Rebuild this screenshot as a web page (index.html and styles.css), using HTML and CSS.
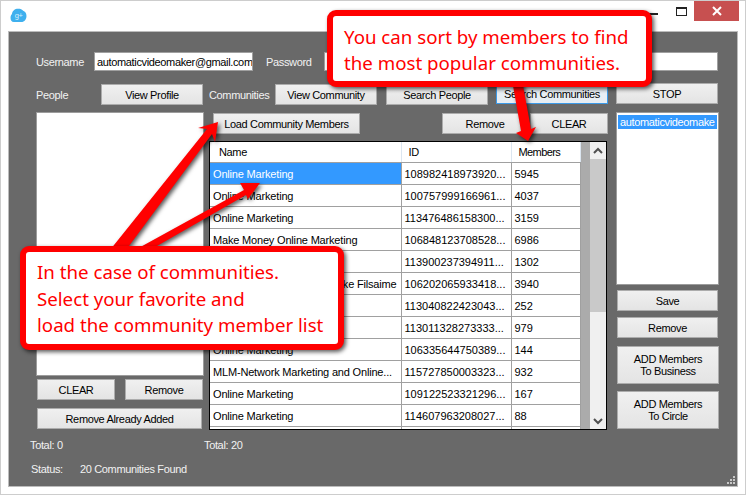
FILE: index.html
```html
<!DOCTYPE html>
<html lang="en">
<head>
<meta charset="UTF-8">
<meta name="viewport" content="width=device-width, initial-scale=1.0">
<title>Google Plus Members</title>
<link rel="stylesheet" href="styles.css">
</head>
<body>
<div class="window">
    <div class="titlebar">
        <svg class="app-icon" width="17" height="15" viewBox="0 0 18 16">
            <path d="M4 15C1.500 15 .5 13 .5 10.500C.5 8.500 1.200 7.500 2 6.500C2.500 3 5 .8 8.500 .8C11 .8 13 1.500 14 3C16 3.800 17.500 5.500 17.500 8.500C17.500 12 15.500 15 12 15Z" fill="#3fb0ee"/>
            <text x="5" y="11" class="app-icon-text">g+</text>
        </svg>
        <div class="win-controls">
            <span class="win-min"></span>
            <span class="win-max"></span>
            <span class="win-close">
                <svg width="10" height="10" viewBox="0 0 10 10"><path d="M1 1L9 9M9 1L1 9" stroke="#fff" stroke-width="2"/></svg>
            </span>
        </div>
    </div>

    <div class="client">
        <div class="login-row">
            <label class="label-user">Username</label>
            <div class="textbox textbox-user">automaticvideomaker@gmail.com</div>
            <label class="label-pass">Password</label>
            <div class="textbox textbox-pass"></div>
        </div>

        <div class="main">
            <!-- people -->
            <div class="col-people">
                <div class="head-row">
                    <span>People</span>
                    <button class="btn btn-profile">View Profile</button>
                </div>
                <div class="listbox people-list"></div>
                <div class="btn-row">
                    <button class="btn btn-half">CLEAR</button>
                    <button class="btn btn-half">Remove</button>
                </div>
                <button class="btn btn-added">Remove Already Added</button>
            </div>

            <!-- communities -->
            <div class="col-comm">
                <div class="head-row">
                    <span class="comm-label">Communities</span>
                    <button class="btn btn-view">View Community</button>
                    <button class="btn btn-search">Search People</button>
                    <button class="btn btn-focus">Search Communities</button>
                </div>
                <div class="tool-row">
                    <button class="btn btn-load">Load Community Members</button>
                    <button class="btn btn-remove">Remove</button>
                    <button class="btn btn-clear">CLEAR</button>
                </div>
                <div class="grid-box">
                    <table class="grid">
                        <thead>
                            <tr><th class="c-name">Name</th><th class="c-id">ID</th><th class="c-mem">Members</th></tr>
                        </thead>
                        <tbody id="rows"></tbody>
                    </table>
                    <div class="grid-empty"></div>
                    <div class="scrollbar">
                        <svg class="chev" width="16" height="17" viewBox="0 0 16 17"><path d="M4 11L8 7L12 11" fill="none" stroke="#505050" stroke-width="2"/></svg>
                        <div class="thumb"></div>
                        <svg class="chev chev-down" width="16" height="17" viewBox="0 0 16 17"><path d="M4 7L8 11L12 7" fill="none" stroke="#505050" stroke-width="2"/></svg>
                    </div>
                </div>
            </div>

            <!-- accounts -->
            <div class="col-acc">
                <button class="btn btn-stop">STOP</button>
                <div class="listbox acc-list"><div class="acc-item">automaticvideomake</div></div>
                <button class="btn btn-side btn-save">Save</button>
                <button class="btn btn-side btn-rem">Remove</button>
                <button class="btn btn-tall btn-biz">ADD Members<br>To Business</button>
                <button class="btn btn-tall btn-circle">ADD Members<br>To Circle</button>
            </div>
        </div>

        <div class="totals">
            <span class="total-left">Total: 0</span>
            <span>Total: 20</span>
        </div>
        <div class="status">
            <span class="status-label">Status:</span>
            <span>20 Communities Found</span>
        </div>

        <svg class="grip" width="10" height="10" viewBox="0 0 10 10">
            <path d="M7 1h2v2h-2zM4 4h2v2h-2zM7 4h2v2h-2zM1 7h2v2h-2zM4 7h2v2h-2zM7 7h2v2h-2z" fill="#c8c8c8"/>
        </svg>
    </div>

    <!-- annotations on top of the screenshot -->
    <svg class="arrows" width="746" height="495" viewBox="0 0 746 495">
        <path d="M110 250L207 129L198 128L218 122L215 142L212 134L126 250Z" fill="#f00"/>
        <path d="M135 250L244 190L240 183L260 183L248 199L246 195L150 250Z" fill="#f00"/>
        <path d="M512 80L522 80L531 129L536 127L528 141L516 133L521 131Z" fill="#f00"/>
    </svg>
    <div class="callout callout-top">You can sort by members to find<br>the most popular communities.</div>
    <div class="callout callout-bottom">In the case of communities.<br>Select your favorite and<br>load the community member list</div>
</div>

<script>
// rows of the communities grid, names under the callout stay empty
const communities = [
    ['Online Marketing', '108982418973920...', '5945'],
    ['Online Marketing', '100757999166961...', '4037'],
    ['Online Marketing', '113476486158300...', '3159'],
    ['Make Money Online Marketing', '106848123708528...', '6986'],
    ['', '113900237394911...', '1302'],
    ['Online Marketing Group, Mike Filsaime', '106202065933418...', '3940'],
    ['', '113040822423043...', '252'],
    ['', '113011328273333...', '979'],
    ['Online Marketing', '106335644750389...', '144'],
    ['MLM-Network Marketing and Online...', '115727850003323...', '932'],
    ['Online Marketing', '109122523321296...', '167'],
    ['Online Marketing', '114607963208027...', '88'],
    ['', '', '']
];

const tbody = document.getElementById('rows');
communities.forEach((row, i) => {
    const tr = document.createElement('tr');
    if (i === 0) tr.className = 'selected';
    tr.innerHTML = `<td>${row[0]}</td><td>${row[1]}</td><td>${row[2]}</td>`;
    tbody.appendChild(tr);
});
</script>
</body>
</html>
```

FILE: styles.css
```css
* {
    box-sizing: border-box;
}
body {
    margin: 0;
    font-family: "Liberation Sans", Arial, sans-serif;
    font-size: 11px;
    letter-spacing: -0.35px;
    color: #000;
    background-color: #fff;
}
.window {
    position: relative;
    width: 746px;
    height: 495px;
    overflow: hidden;
    background-color: #fff;
    border: 1px solid #cdcdcd;
    padding: 0 7px;
}
.titlebar {
    height: 30px;
    position: relative;
}
.app-icon {
    position: absolute;
    left: 2px;
    top: 7px;
}
.app-icon-text {
    font-size: 8px;
    fill: #d8f0fc;
}
.win-controls {
    display: flex;
    justify-content: flex-end;
    margin-right: -1px;
}
.win-min {
    width: 10px;
    height: 2px;
    margin-top: 12px;
    margin-right: 18px;
    background-color: #222;
}
.win-max {
    width: 11px;
    height: 9px;
    margin-top: 6px;
    margin-right: 7px;
    border: 1px solid #222;
    border-top-width: 2px;
}
.win-close {
    width: 45px;
    height: 20px;
    background-color: #c75050;
    display: flex;
    align-items: center;
    justify-content: center;
}
.client {
    position: relative;
    height: 456px;
    background-color: #696969;
    border: 1px solid #bcbcbc;
    padding: 20px 19px 0 27px;
    color: #f2f2f2;
}
.login-row {
    display: flex;
    align-items: center;
    height: 19px;
}
.textbox {
    height: 19px;
    padding: 2px 2px;
    background-color: #fff;
    color: #000;
    border: 1px solid #a0a0a0;
    white-space: nowrap;
    overflow: hidden;
    line-height: 14px;
}
.label-user {
    width: 58px;
}
.textbox-user {
    width: 159px;
}
.label-pass {
    margin-left: 13px;
    width: 58px;
}
.textbox-pass {
    flex: 1;
}
.main {
    display: flex;
    margin-top: 12px;
}
.head-row {
    display: flex;
    align-items: center;
    height: 21px;
    margin-top: 1px;
}
.btn {
    flex-shrink: 0;
    height: 21px;
    padding: 0;
    font-family: inherit;
    font-size: 11px;
    letter-spacing: inherit;
    color: #000;
    background: linear-gradient(#f0f0f0, #e4e4e4);
    border: 1px solid #acacac;
    border-radius: 0;
}
.col-people {
    width: 168px;
}
.btn-profile {
    width: 102px;
    margin-left: auto;
    margin-right: 1px;
}
.listbox {
    background-color: #fff;
    border: 1px solid #9c9c9c;
}
.people-list {
    height: 264px;
    margin-top: 7px;
}
.btn-row {
    display: flex;
    justify-content: space-between;
    margin: 3px 1px 0 1px;
}
.btn-half {
    width: 78px;
}
.btn-added {
    width: 165px;
    margin: 8px 0 0 1px;
    display: block;
}
.col-comm {
    width: 398px;
    margin-left: 5px;
}
.comm-label {
    flex-shrink: 0;
    width: 66px;
}
.btn-view {
    width: 102px;
    margin-right: 9px;
}
.btn-search {
    width: 102px;
    margin-right: 8px;
}
.btn-focus {
    width: 112px;
    height: 20px;
    margin-top: -1px;
    border-color: #3c9ae8;
    background: #e8eef4;
}
.tool-row {
    display: flex;
    margin-top: 8px;
    padding-left: 4px;
}
.btn-load {
    width: 147px;
}
.btn-remove {
    width: 86px;
    margin-left: 82px;
}
.btn-clear {
    width: 78px;
    margin-left: 2px;
}
.grid-box {
    display: flex;
    height: 289px;
    margin-top: 7px;
    background-color: #fff;
    color: #000;
    border: 1px solid #000;
    overflow: hidden;
}
.grid {
    width: 371px;
    table-layout: fixed;
    border-collapse: collapse;
    flex-shrink: 0;
    align-self: flex-start;
}
.c-name {
    width: 191px;
    padding-left: 9px;
}
.c-id {
    width: 110px;
    padding-left: 7px;
}
.c-mem {
    padding-left: 7px;
    letter-spacing: -0.6px;
}
.grid th {
    height: 20px;
    padding-top: 2px;
    font-weight: normal;
    text-align: left;
    border-right: 1px solid #dce6f0;
    border-bottom: 1px solid #a0a0a0;
}
.grid td {
    height: 22px;
    padding: 1px 3px 0;
    white-space: nowrap;
    overflow: hidden;
    letter-spacing: 0;
    border-right: 1px solid #a0a0a0;
    border-bottom: 1px solid #a0a0a0;
}
.grid td:first-child {
    letter-spacing: -0.18px;
}
.selected td:first-child {
    background-color: #3399ff;
    color: #fff;
}
.grid-empty {
    width: 9px;
    flex-shrink: 0;
    background-color: #ababab;
}
.scrollbar {
    position: relative;
    flex: 1;
    background-color: #f0f0f0;
}
.chev {
    display: block;
}
.chev-down {
    position: absolute;
    left: 0;
    bottom: 0;
}
.thumb {
    height: 153px;
    background-color: #c9c9c9;
}
.col-acc {
    width: 102px;
    margin-left: 9px;
}
.btn-stop {
    display: block;
    width: 102px;
}
.btn-side {
    display: block;
    width: 101px;
}
.acc-list {
    width: 103px;
    height: 173px;
    margin-top: 8px;
    padding: 2px 1px;
    color: #fff;
    overflow: hidden;
}
.acc-item {
    background-color: #3399ff;
    white-space: nowrap;
    overflow: hidden;
    line-height: 14px;
    padding-left: 2px;
}
.btn-save {
    margin-top: 5px;
    margin-left: 1px;
}
.btn-rem {
    margin-top: 6px;
    margin-left: 1px;
}
.btn-tall {
    display: block;
    width: 102px;
    height: 38px;
    margin-left: 1px;
}
.btn-biz {
    margin-top: 8px;
}
.btn-circle {
    margin-top: 7px;
}
.totals {
    display: flex;
    margin: 9px 0 0 -6px;
    line-height: 13px;
}
.total-left {
    width: 174px;
}
.status {
    display: flex;
    margin: 11px 0 0 -5px;
    line-height: 13px;
}
.status-label {
    width: 49px;
}
.grip {
    position: absolute;
    right: 1px;
    bottom: 1px;
}
.arrows {
    position: absolute;
    left: -1px;
    top: -1px;
    filter: drop-shadow(2px 2px 2px rgba(0, 0, 0, 0.65));
}
.callout {
    position: absolute;
    background-color: #fff;
    color: #f00;
    border: 6px solid #f00;
    border-radius: 9px;
    box-shadow: 2px 2px 4px rgba(0, 0, 0, 0.65);
    font-family: "Noto Sans", Arial, sans-serif;
    font-size: 18.7px;
    letter-spacing: 0;
    white-space: nowrap;
}
.callout-top {
    left: 326px;
    top: 9px;
    width: 325px;
    height: 77px;
    padding: 8px 0 0 11px;
    line-height: 26px;
}
.callout-bottom {
    left: 19px;
    top: 245px;
    width: 324px;
    height: 104px;
    padding: 7px 0 0 11px;
    line-height: 26.500px;
}
```
